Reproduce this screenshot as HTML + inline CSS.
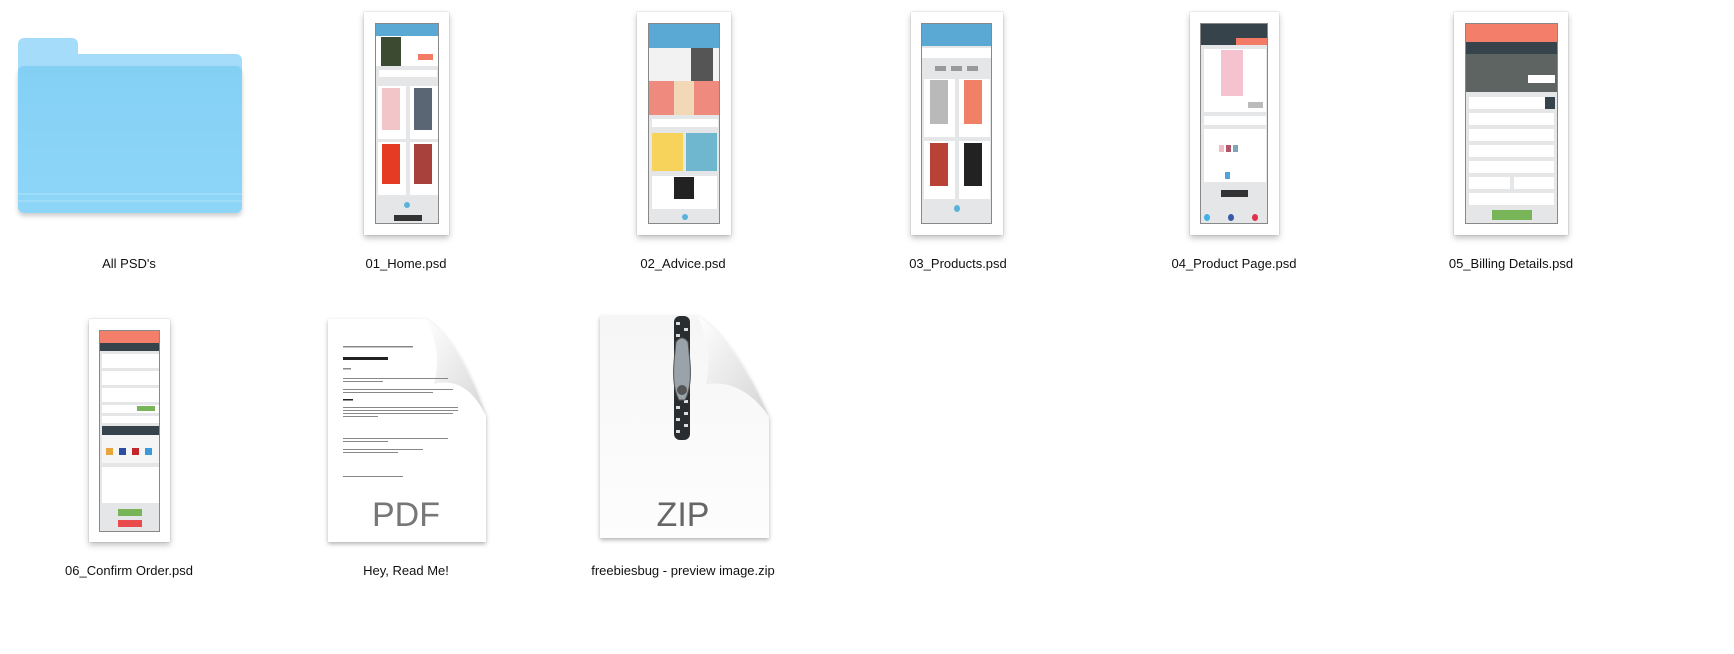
<!DOCTYPE html>
<html><head><meta charset="utf-8"><style>
*{margin:0;padding:0;box-sizing:border-box}
body{width:1734px;height:654px;background:#fff;position:relative;overflow:hidden;font-family:"Liberation Sans",sans-serif}
.a{position:absolute}
.lbl{position:absolute;font-size:13px;color:#111;text-align:center;width:260px;white-space:nowrap}
.frame{position:absolute;background:#fff;box-shadow:0 3px 6px rgba(0,0,0,.25),0 0 1px rgba(0,0,0,.3)}
.scr{position:absolute;background:#e4e6e8;border:1px solid #888;overflow:hidden}
.scr div{position:absolute}
</style></head><body>

<!-- folder -->
<div class="a" style="left:18px;top:38px;width:60px;height:30px;background:#a4dcfa;border-radius:6px 6px 0 0"></div>
<div class="a" style="left:18px;top:54px;width:224px;height:20px;background:#a4dcfa;border-radius:6px 6px 0 0"></div>
<div class="a" style="left:18px;top:66px;width:224px;height:147px;background:linear-gradient(#84d0f5,#8ed6f8);border-radius:6px;box-shadow:0 3px 5px rgba(0,0,0,.2)"></div>
<div class="a" style="left:18px;top:193px;width:224px;height:2px;background:#9fdcf8"></div>
<div class="a" style="left:18px;top:200px;width:224px;height:2px;background:#9fdcf8"></div>
<div class="lbl" style="left:-1px;top:256px">All PSD's</div>

<!-- 01 Home -->
<div class="frame" style="left:364px;top:12px;width:85px;height:223px"></div>
<div class="scr" style="left:375px;top:23px;width:64px;height:201px">
<div style="left:0;top:0;width:64px;height:12px;background:#5aa8d4"></div>
<div style="left:0;top:12px;width:64px;height:30px;background:#fff"></div>
<div style="left:5px;top:13px;width:20px;height:29px;background:#3d4a32"></div>
<div style="left:42px;top:30px;width:15px;height:6px;background:#f37b66"></div>
<div style="left:3px;top:46px;width:58px;height:7px;background:#fff"></div>
<div style="left:2px;top:62px;width:28px;height:53px;background:#fff"></div>
<div style="left:34px;top:62px;width:28px;height:53px;background:#fff"></div>
<div style="left:6px;top:64px;width:18px;height:42px;background:#f2c5c9"></div>
<div style="left:38px;top:64px;width:18px;height:42px;background:#5b6675"></div>
<div style="left:2px;top:118px;width:28px;height:53px;background:#fff"></div>
<div style="left:34px;top:118px;width:28px;height:53px;background:#fff"></div>
<div style="left:6px;top:120px;width:18px;height:40px;background:#e53a24"></div>
<div style="left:38px;top:120px;width:18px;height:40px;background:#a8413c"></div>
<div style="left:28px;top:178px;width:6px;height:6px;border-radius:50%;background:#5ab3dc"></div>
<div style="left:18px;top:191px;width:28px;height:6px;background:#333"></div>
</div>
<div class="lbl" style="left:276px;top:256px">01_Home.psd</div>

<!-- 02 Advice -->
<div class="frame" style="left:637px;top:12px;width:94px;height:223px"></div>
<div class="scr" style="left:648px;top:23px;width:72px;height:201px">
<div style="left:0;top:0;width:72px;height:24px;background:#5aa8d4"></div>
<div style="left:0;top:24px;width:72px;height:33px;background:#f2f2f2"></div>
<div style="left:42px;top:24px;width:22px;height:33px;background:#555"></div>
<div style="left:0;top:57px;width:72px;height:34px;background:#ee8a7e"></div>
<div style="left:25px;top:57px;width:20px;height:34px;background:#f3d8b8"></div>
<div style="left:3px;top:95px;width:66px;height:8px;background:#fff"></div>
<div style="left:3px;top:109px;width:31px;height:38px;background:#f7d35c"></div>
<div style="left:37px;top:109px;width:31px;height:38px;background:#6fb6cf"></div>
<div style="left:3px;top:152px;width:65px;height:33px;background:#fff"></div>
<div style="left:25px;top:153px;width:20px;height:22px;background:#222"></div>
<div style="left:33px;top:190px;width:6px;height:6px;border-radius:50%;background:#5ab3dc"></div>
</div>
<div class="lbl" style="left:553px;top:256px">02_Advice.psd</div>

<!-- 03 Products -->
<div class="frame" style="left:911px;top:12px;width:92px;height:223px"></div>
<div class="scr" style="left:921px;top:23px;width:71px;height:201px">
<div style="left:0;top:0;width:71px;height:22px;background:#5aa8d4"></div>
<div style="left:0;top:24px;width:71px;height:10px;background:#fff"></div>
<div style="left:13px;top:42px;width:11px;height:5px;background:#999"></div>
<div style="left:29px;top:42px;width:11px;height:5px;background:#999"></div>
<div style="left:45px;top:42px;width:11px;height:5px;background:#999"></div>
<div style="left:2px;top:55px;width:31px;height:58px;background:#fff"></div>
<div style="left:37px;top:55px;width:31px;height:58px;background:#fff"></div>
<div style="left:8px;top:56px;width:18px;height:44px;background:#b9b9b9"></div>
<div style="left:42px;top:56px;width:18px;height:44px;background:#f08066"></div>
<div style="left:2px;top:117px;width:31px;height:58px;background:#fff"></div>
<div style="left:37px;top:117px;width:31px;height:58px;background:#fff"></div>
<div style="left:8px;top:119px;width:18px;height:43px;background:#b84236"></div>
<div style="left:42px;top:119px;width:18px;height:43px;background:#222"></div>
<div style="left:32px;top:181px;width:6px;height:7px;border-radius:50%;background:#5ab3dc"></div>
</div>
<div class="lbl" style="left:828px;top:256px">03_Products.psd</div>

<!-- 04 Product Page -->
<div class="frame" style="left:1190px;top:12px;width:89px;height:223px"></div>
<div class="scr" style="left:1200px;top:23px;width:68px;height:201px">
<div style="left:0;top:0;width:68px;height:21px;background:#37434b"></div>
<div style="left:35px;top:14px;width:33px;height:7px;background:#f37b66"></div>
<div style="left:3px;top:25px;width:62px;height:63px;background:#fff"></div>
<div style="left:20px;top:26px;width:22px;height:46px;background:#f4c3cf"></div>
<div style="left:47px;top:78px;width:15px;height:6px;background:#bbb"></div>
<div style="left:3px;top:92px;width:62px;height:9px;background:#fff"></div>
<div style="left:3px;top:105px;width:62px;height:53px;background:#fff"></div>
<div style="left:18px;top:121px;width:5px;height:7px;background:#f2bcc5"></div>
<div style="left:25px;top:121px;width:5px;height:7px;background:#b0566a"></div>
<div style="left:32px;top:121px;width:5px;height:7px;background:#7fa6b8"></div>
<div style="left:24px;top:148px;width:5px;height:7px;background:#4ea6d8"></div>
<div style="left:20px;top:166px;width:27px;height:7px;background:#333"></div>
<div style="left:3px;top:190px;width:6px;height:7px;border-radius:50%;background:#3fb0e8"></div>
<div style="left:27px;top:190px;width:6px;height:7px;border-radius:50%;background:#3759a8"></div>
<div style="left:51px;top:190px;width:6px;height:7px;border-radius:50%;background:#e0304a"></div>
</div>
<div class="lbl" style="left:1104px;top:256px">04_Product Page.psd</div>

<!-- 05 Billing -->
<div class="frame" style="left:1454px;top:12px;width:114px;height:223px"></div>
<div class="scr" style="left:1465px;top:23px;width:93px;height:201px">
<div style="left:0;top:0;width:93px;height:18px;background:#f37f6a"></div>
<div style="left:0;top:18px;width:93px;height:12px;background:#37434b"></div>
<div style="left:0;top:30px;width:93px;height:38px;background:#5d6461"></div>
<div style="left:62px;top:51px;width:27px;height:8px;background:#fff"></div>
<div style="left:3px;top:73px;width:85px;height:12px;background:#fff"></div>
<div style="left:79px;top:73px;width:10px;height:12px;background:#37434b"></div>
<div style="left:3px;top:89px;width:85px;height:12px;background:#fff"></div>
<div style="left:3px;top:105px;width:85px;height:12px;background:#fff"></div>
<div style="left:3px;top:121px;width:85px;height:12px;background:#fff"></div>
<div style="left:3px;top:137px;width:85px;height:12px;background:#fff"></div>
<div style="left:3px;top:153px;width:41px;height:12px;background:#fff"></div>
<div style="left:48px;top:153px;width:40px;height:12px;background:#fff"></div>
<div style="left:3px;top:169px;width:85px;height:12px;background:#fff"></div>
<div style="left:26px;top:186px;width:40px;height:10px;background:#78b559"></div>
</div>
<div class="lbl" style="left:1381px;top:256px">05_Billing Details.psd</div>

<!-- 06 Confirm -->
<div class="frame" style="left:89px;top:319px;width:81px;height:223px"></div>
<div class="scr" style="left:99px;top:330px;width:61px;height:202px">
<div style="left:0;top:0;width:61px;height:12px;background:#f37f6a"></div>
<div style="left:0;top:12px;width:61px;height:8px;background:#37434b"></div>
<div style="left:2px;top:23px;width:57px;height:14px;background:#fff"></div>
<div style="left:2px;top:40px;width:57px;height:14px;background:#fff"></div>
<div style="left:2px;top:57px;width:57px;height:14px;background:#fff"></div>
<div style="left:2px;top:74px;width:57px;height:8px;background:#fff"></div>
<div style="left:37px;top:75px;width:18px;height:5px;background:#78b559"></div>
<div style="left:2px;top:85px;width:57px;height:7px;background:#fff"></div>
<div style="left:2px;top:95px;width:57px;height:9px;background:#37434b"></div>
<div style="left:2px;top:104px;width:57px;height:28px;background:#f5f5f5"></div>
<div style="left:6px;top:117px;width:7px;height:7px;background:#e8a63a"></div>
<div style="left:19px;top:117px;width:7px;height:7px;background:#2b4ea0"></div>
<div style="left:32px;top:117px;width:7px;height:7px;background:#c1272d"></div>
<div style="left:45px;top:117px;width:7px;height:7px;background:#3a9ad9"></div>
<div style="left:2px;top:136px;width:57px;height:36px;background:#fff"></div>
<div style="left:18px;top:178px;width:24px;height:7px;background:#78b559"></div>
<div style="left:18px;top:189px;width:24px;height:7px;background:#e94b4b"></div>
</div>
<div class="lbl" style="left:-1px;top:563px">06_Confirm Order.psd</div>

<!-- PDF -->
<svg class="a" style="left:322px;top:316px" width="172" height="234">
<defs><linearGradient id="c" x1="0" y1="0" x2="1" y2="1"><stop offset="0" stop-color="#fff"/><stop offset="1" stop-color="#d6d6d6"/></linearGradient>
<filter id="s"><feDropShadow dx="0" dy="2" stdDeviation="2" flood-opacity=".3"/></filter></defs>
<path d="M6 3 H104 C130 20 150 60 164 100 V226 H6 Z" fill="#fff" filter="url(#s)"/>
<path d="M104 3 C115 25 118 45 112 68 C135 62 152 75 164 100 C150 60 130 20 104 3 Z" fill="url(#c)"/>
<g fill="#888">
<rect x="21" y="30" width="70" height="1.5"/>
<rect x="21" y="41" width="45" height="3" fill="#222"/>
<rect x="21" y="52" width="8" height="1.5"/>
<rect x="21" y="62" width="105" height="1"/><rect x="21" y="65" width="40" height="1"/>
<rect x="21" y="73" width="110" height="1"/><rect x="21" y="76" width="90" height="1"/>
<rect x="21" y="83" width="10" height="1.5" fill="#222"/>
<rect x="21" y="91" width="115" height="1"/><rect x="21" y="94" width="115" height="1"/><rect x="21" y="97" width="110" height="1"/><rect x="21" y="100" width="35" height="1"/>
<rect x="21" y="122" width="105" height="1"/><rect x="21" y="125" width="45" height="1"/>
<rect x="21" y="133" width="80" height="1"/><rect x="21" y="136" width="55" height="1"/>
<rect x="21" y="160" width="60" height="1"/>
</g>
<text x="84" y="210" font-family="Liberation Sans,sans-serif" font-size="34" fill="#777" text-anchor="middle">PDF</text>
</svg>
<div class="lbl" style="left:276px;top:563px">Hey, Read Me!</div>

<!-- ZIP -->
<svg class="a" style="left:594px;top:312px" width="182" height="234">
<defs><linearGradient id="p" x1="0" y1="0" x2="0" y2="1"><stop offset="0" stop-color="#f6f6f6"/><stop offset="1" stop-color="#fdfdfd"/></linearGradient>
<linearGradient id="c2" x1="0" y1="0" x2="1" y2="1"><stop offset="0" stop-color="#fff"/><stop offset="1" stop-color="#d4d4d4"/></linearGradient></defs>
<path d="M6 4 H104 C130 20 158 65 175 105 V226 H6 Z" fill="url(#p)" filter="url(#s)"/>
<path d="M104 4 C114 28 117 50 112 72 C138 68 160 82 175 105 C158 65 130 20 104 4 Z" fill="url(#c2)"/>
<rect x="80" y="4" width="16" height="124" rx="6" fill="#2a2d30"/>
<g fill="#ddd"><rect x="82" y="10" width="4" height="3"/><rect x="90" y="16" width="4" height="3"/><rect x="82" y="22" width="4" height="3"/><rect x="90" y="88" width="4" height="3"/><rect x="82" y="94" width="4" height="3"/><rect x="90" y="100" width="4" height="3"/><rect x="82" y="106" width="4" height="3"/><rect x="90" y="112" width="4" height="3"/><rect x="82" y="118" width="4" height="3"/></g>
<path d="M82 30 Q88 22 94 30 L96 50 Q98 75 91 88 L85 88 Q78 75 80 50 Z" fill="#9aa3aa" stroke="#555" stroke-width="1"/>
<circle cx="88" cy="78" r="5" fill="#555"/>
<text x="89" y="214" font-family="Liberation Sans,sans-serif" font-size="34" fill="#666" text-anchor="middle">ZIP</text>
</svg>
<div class="lbl" style="left:553px;top:563px">freebiesbug - preview image.zip</div>

</body></html>
